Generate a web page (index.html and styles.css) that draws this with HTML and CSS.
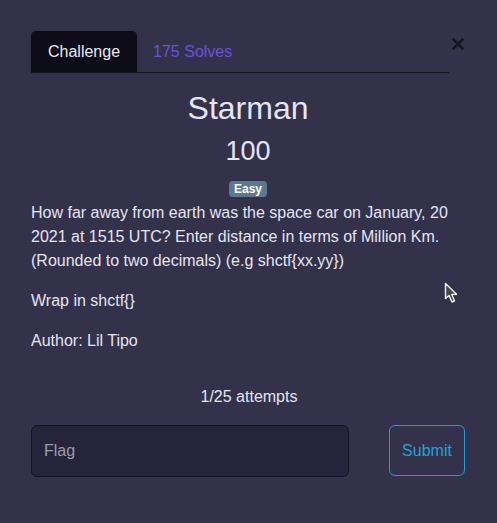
FILE: index.html
```html
<!DOCTYPE html>
<html>
<head>
<meta charset="utf-8">
<link rel="stylesheet" href="styles.css">
</head>
<body>
<div class="modal">
  <div class="head">
    <ul class="tabs">
      <li class="tab active">Challenge</li>
      <li class="tab link">175 Solves</li>
    </ul>
    <button class="close" aria-label="Close"><svg width="12" height="12" viewBox="0 0 12 12"><path d="M1.5 1.5L10.5 10.5M10.5 1.5L1.5 10.5" stroke="#17161f" stroke-width="2.6" stroke-linecap="square"/></svg></button>
  </div>
  <h2 class="title">Starman</h2>
  <h3 class="points">100</h3>
  <div class="badge-row"><span class="badge">Easy</span></div>
  <div class="desc">
    <p>How far away from earth was the space car on January, 20 2021 at 1515 UTC? Enter distance in terms of Million Km. (Rounded to two decimals) (e.g shctf{xx.yy})</p>
    <p>Wrap in shctf{}</p>
    <p class="last">Author: Lil Tipo</p>
  </div>
  <div class="attempts">1/25 attempts</div>
  <form class="submit-row">
    <input class="flag" type="text" placeholder="Flag">
    <button class="submit" type="button">Submit</button>
  </form>
</div>
<svg class="cursor" width="16" height="22" viewBox="0 0 16 22"><path d="M1.5 1.5L1.5 16.5L5 13.5L8 20L10.5 18.8L7.8 12.5L12.5 12.2Z" fill="#474747" stroke="#f2f2f2" stroke-width="1.4" stroke-linejoin="round"/></svg>
</body>
</html>
```
FILE: styles.css
```css
html, body {
  margin: 0;
  padding: 0;
  background: #33324a;
  height: 100%;
}
body {
  font-family: "Liberation Sans", Arial, sans-serif;
  color: #e4e4f2;
  font-size: 16px;
  line-height: 24px;
}
.modal {
  padding: 31px 32px 0 31px;
}
.head {
  display: flex;
  align-items: flex-start;
}
.tabs {
  list-style: none;
  margin: 0;
  padding: 0;
  display: flex;
  width: 419px;
  border-bottom: 1px solid #15141f;
  height: 41px;
}
.tab {
  padding: 0 16px;
  line-height: 41px;
  height: 41px;
}
.tab.active {
  background: #0e0d17;
  border-radius: 5px 5px 0 0;
  padding: 0 17px;
  color: #e8e8f5;
}
.tab.link {
  color: #6e4fe0;
}
.close {
  background: none;
  border: 0;
  padding: 0;
  margin: 6px 0 0 1px;
  width: 15px;
  height: 14px;
  display: flex;
  align-items: center;
  justify-content: center;
}
.title {
  margin: 15px 0 0;
  font-size: 32px;
  line-height: 40px;
  font-weight: 400;
  text-align: center;
}
.points {
  margin: 6px 0 0;
  font-size: 27px;
  line-height: 34px;
  font-weight: 400;
  text-align: center;
}
.badge-row {
  margin-top: 13px;
  display: flex;
  justify-content: center;
  height: 16px;
}
.badge {
  background: #5e7891;
  color: #fff;
  font-weight: 700;
  font-size: 12px;
  line-height: 16px;
  padding: 0 5px;
  border-radius: 4px;
}
.desc {
  margin-top: 4px;
}
.desc p {
  margin: 0 0 16px;
}
.desc p.last {
  margin-bottom: 0;
}
.attempts {
  margin-top: 32px;
  text-align: center;
  padding-left: 2px;
}
.submit-row {
  margin: 16px 0 0;
  display: flex;
  justify-content: space-between;
  align-items: flex-start;
}
.flag {
  box-sizing: border-box;
  width: 318px;
  height: 52px;
  background: #25243a;
  border: 1px solid #14131e;
  border-radius: 6px;
  padding: 0 12px;
  font-family: inherit;
  font-size: 16px;
  color: #e4e4f2;
  outline: none;
}
.flag::placeholder {
  color: #9c9bab;
}
.submit {
  box-sizing: border-box;
  width: 76px;
  height: 51px;
  background: transparent;
  border: 1px solid #1e9bd3;
  border-radius: 6px;
  color: #22a2dc;
  font-family: inherit;
  font-size: 16px;
  padding: 0;
}
.cursor {
  position: absolute;
  left: 444px;
  top: 282px;
}
```
